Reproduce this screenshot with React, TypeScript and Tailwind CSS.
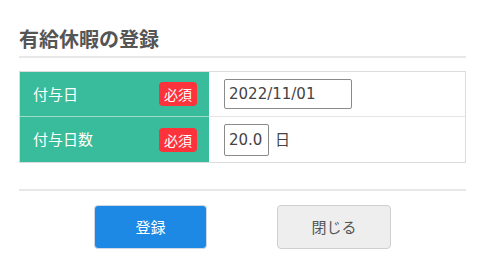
import type { ReactNode } from "react";

const Badge = () => (
  <span className="flex h-[24px] w-[38px] items-center justify-center rounded-[4px] bg-[#fc333b] text-[14px] leading-none text-white">
    必須
  </span>
);

const Row = ({ label, children, last }: { label: string; children: ReactNode; last?: boolean }) => (
  <div className={`flex h-[45px] ${last ? "" : "border-b border-[#e6e6e6]"}`}>
    <div
      className={`flex w-[189px] items-center justify-between bg-[#38bc9b] pl-[13px] pr-[12px] ${
        last ? "" : "border-b border-[#9fdcc9] -mb-px"
      }`}
    >
      <span className="text-[15px] text-white">{label}</span>
      <Badge />
    </div>
    <div className="flex flex-1 items-center pl-[15px]">{children}</div>
  </div>
);

export default function App() {
  return (
    <div className="h-[273px] w-[484px] bg-white pl-[19px] pr-[18px] pt-[24px] font-['Noto_Sans_CJK_JP','Noto_Sans',sans-serif] text-[#333]">
      <h2 className="border-b-2 border-[#e8e8e8] pb-[2px] text-[20px] font-bold leading-[30px] text-[#555]">
        有給休暇の登録
      </h2>

      <div className="mt-[13px] border border-[#dcdcdc]">
        <Row label="付与日">
          <input
            readOnly
            defaultValue="2022/11/01"
            className="h-[30px] w-[128px] rounded-[2px] border border-[#8a8a8a] pl-[4px] font-['DejaVu_Sans','Noto_Sans_CJK_JP',sans-serif] text-[15px] text-[#444] outline-none"
          />
        </Row>
        <Row label="付与日数" last>
          <input
            readOnly
            defaultValue="20.0"
            className="h-[32px] w-[45px] rounded-[2px] border border-[#8a8a8a] pl-[4px] font-['DejaVu_Sans','Noto_Sans_CJK_JP',sans-serif] text-[15px] text-[#444] outline-none"
          />
          <span className="ml-[6px] text-[15px] text-[#444]">日</span>
        </Row>
      </div>

      <div className="mt-[26px] border-t-2 border-[#e8e8e8]" />

      <div className="mt-[14px] flex justify-center gap-[70px]">
        <button className="h-[44px] w-[113px] rounded-[4px] border border-[#cfd8e3] bg-[#1e88e5] text-[15px] text-white">
          登録
        </button>
        <button className="h-[44px] w-[114px] rounded-[4px] border border-[#cfcfcf] bg-[#eeeeee] text-[15px] text-[#555]">
          閉じる
        </button>
      </div>
    </div>
  );
}
